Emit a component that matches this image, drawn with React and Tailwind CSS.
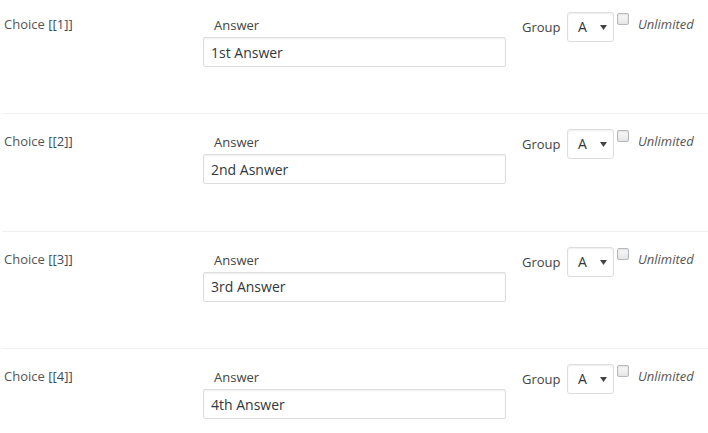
import React from 'react';

const choices = [
  { id: 1, answer: '1st Answer' },
  { id: 2, answer: '2nd Asnwer' },
  { id: 3, answer: '3rd Answer' },
  { id: 4, answer: '4th Answer' },
];

const ChoiceRow = ({ choice }) => (
  <div className="flex items-start h-[117.4px] border-t border-[#f0f0f0] ml-[2px]">
    {/* Choice label */}
    <div className="w-[201px] pl-[2px] pt-[18px] text-[13px] leading-[18px] text-[#555]">
      Choice <span className="text-[#3a4b5c]">[[{choice.id}]]</span>
    </div>

    {/* Answer */}
    <div className="w-[303px] flex flex-col">
      <div className="mt-[19px] pl-[11px] text-[13px] leading-[18px] text-[#444]">Answer</div>
      <input
        type="text"
        defaultValue={choice.answer}
        className="mt-[3px] h-[30px] w-full border border-[#ddd] rounded-[2px] bg-white px-[7px] text-[14px] text-[#32373c] shadow-[inset_0_1px_2px_rgba(0,0,0,0.07)] outline-none"
      />
    </div>

    {/* Group */}
    <div className="ml-[16px] w-[45px] mt-[21px] text-[13px] leading-[18px] text-[#444]">Group</div>
    <div className="mt-[15px] w-[47px] h-[30px] border border-[#ddd] rounded-[3px] bg-white flex items-center justify-between pl-[10px] pr-[6px] shadow-[inset_0_1px_2px_rgba(0,0,0,0.07)]">
      <span className="text-[14px] text-[#32373c] leading-none">A</span>
      <svg width="7" height="5" viewBox="0 0 7 5" className="mt-[1px]">
        <path d="M0 0 L7 0 L3.5 5 Z" fill="#444" />
      </svg>
    </div>

    {/* Unlimited */}
    <div className="ml-[3px] mt-[16px] w-[12px] h-[12px] border border-[#b4b9be] rounded-[2px] bg-gradient-to-b from-[#fafafa] to-[#e6e6e6] shadow-[inset_0_1px_2px_rgba(0,0,0,0.1)]" />
    <div className="ml-[9px] mt-[18px] text-[13px] leading-[18px] italic text-[#555]">Unlimited</div>
  </div>
);

const App = () => {
  return (
    <div
      className="w-[708px] h-[433px] overflow-hidden bg-white"
      style={{ fontFamily: '"Open Sans", "Noto Sans", sans-serif' }}
    >
      <div className="-mt-[4px]">
        {choices.map(c => (
          <ChoiceRow key={c.id} choice={c} />
        ))}
      </div>
    </div>
  );
};

export default App;
